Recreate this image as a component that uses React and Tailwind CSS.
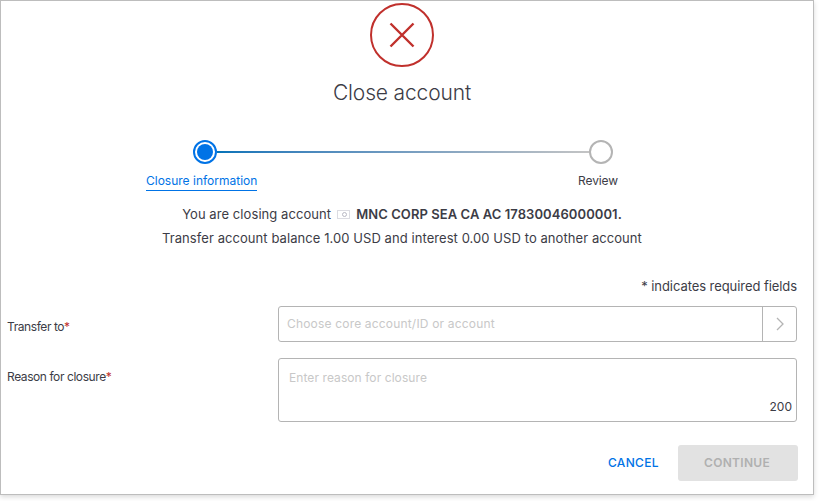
export default function App() {
  const font = { fontFamily: '"Inter", "Liberation Sans", sans-serif' };
  return (
    <div className="w-[820px] h-[501px] bg-white overflow-hidden" style={font}>
      <div className="w-[814px] h-[495px] border border-[#bdbdbd] bg-white shadow-[0_2px_5px_rgba(0,0,0,0.15)] flex flex-col text-[#3c3c46]">
        <div className="flex flex-col items-center pt-[2px] pr-[10px]">
          <div className="w-16 h-16 rounded-full border-[2px] border-[#c0302c] flex items-center justify-center">
            <svg width="26" height="26" viewBox="0 0 26 26" fill="none" stroke="#c0302c" strokeWidth="2.4">
              <path d="M1.5 1.5 L24.5 24.5 M24.5 1.5 L1.5 24.5" />
            </svg>
          </div>
          <h1 className="mt-[11px] text-[21px] leading-[30px] font-light tracking-[-0.15px] text-[#3c3c46]">Close account</h1>
        </div>

        <div className="mt-[32px] ml-[145px] w-[472px] h-[60px] flex justify-between">
          <div className="flex flex-col items-center">
            <div className="w-6 h-6 ml-[7px] rounded-full border-[2px] border-[#0073e6] bg-white flex items-center justify-center shrink-0 z-10">
              <div className="w-4 h-4 rounded-full bg-[#0073e6]" />
            </div>
            <span className="mt-[9px] text-[12px] leading-[16px] text-[#0073e6] border-b border-[#0073e6] pb-[1px] whitespace-nowrap">Closure information</span>
          </div>
          <div className="flex-1 h-[2px] mt-[11px] ml-[-40px] mr-[-12px] bg-gradient-to-r from-[#0073b8] to-[#c4c4c4]" />
          <div className="flex flex-col items-center">
            <div className="w-6 h-6 ml-[6px] rounded-full border-[2px] border-[#b4b4b4] bg-white shrink-0 z-10" />
            <span className="mt-[9px] text-[12px] leading-[16px] tracking-[-0.1px] whitespace-nowrap">Review</span>
          </div>
        </div>

        <div className="mt-[2px] pr-[10px] text-center text-[13px] leading-[24px] tracking-[0.07px]">
          <p className="flex items-center justify-center">
            <span>You are closing account</span>
            <svg className="mx-[6px]" width="13" height="9" viewBox="0 0 13 9" fill="none" stroke="#b9b9c4" strokeWidth="1" strokeDasharray="1 1">
              <rect x="0.5" y="0.5" width="12" height="8" />
              <circle cx="7.5" cy="4.5" r="2" strokeDasharray="none" />
            </svg>
            <b className="font-semibold">MNC CORP SEA CA AC 17830046000001.</b>
          </p>
          <p>Transfer account balance 1.00 USD and interest 0.00 USD to another account</p>
        </div>

        <p className="mt-[26px] pr-[16px] text-right text-[13px] leading-[20px] tracking-[-0.07px]">* indicates required fields</p>

        <div className="mt-[10px] pl-[6px] pr-[16px] flex">
          <label className="w-[271px] pt-[13px] text-[12px] leading-[16px] tracking-[-0.42px]">Transfer to<span className="text-[#c0302c]">*</span></label>
          <div className="flex-1 h-[36px] border border-[#b4b4b4] rounded-[3px] flex items-center">
            <span className="flex-1 pl-[8px] text-[12px] tracking-[0.18px] text-[#c8c8c8]">Choose core account/ID or account</span>
            <div className="w-[34px] h-full border-l border-[#b4b4b4] flex items-center justify-center">
              <svg width="8" height="14" viewBox="0 0 8 14" fill="none" stroke="#b4b4b4" strokeWidth="1.3"><path d="M1 1 L7 7 L1 13" /></svg>
            </div>
          </div>
        </div>

        <div className="mt-[16px] pl-[6px] pr-[16px] flex">
          <label className="w-[271px] pt-[11px] text-[12px] leading-[16px] tracking-[-0.42px]">Reason for closure<span className="text-[#c0302c]">*</span></label>
          <div className="flex-1 h-[64px] border border-[#b4b4b4] rounded-[3px] flex flex-col justify-between pl-[10px] pr-[11px] pt-[11px] pb-[6px]">
            <span className="text-[12px] leading-[16px] tracking-[0.08px] text-[#c8c8c8]">Enter reason for closure</span>
            <span className="self-end text-[12px] leading-[16px] -mr-[7px]">200</span>
          </div>
        </div>

        <div className="mt-[23px] pr-[15px] flex justify-end items-center">
          <button className="mr-[19px] text-[12px] font-medium tracking-[0.35px] text-[#0073e6]">CANCEL</button>
          <button className="w-[120px] h-[36px] rounded-[3px] bg-[#e2e2e2] text-[12px] font-semibold tracking-[0.3px] text-[#b0b0b0] pr-[2px]">CONTINUE</button>
        </div>
      </div>
    </div>
  );
}
